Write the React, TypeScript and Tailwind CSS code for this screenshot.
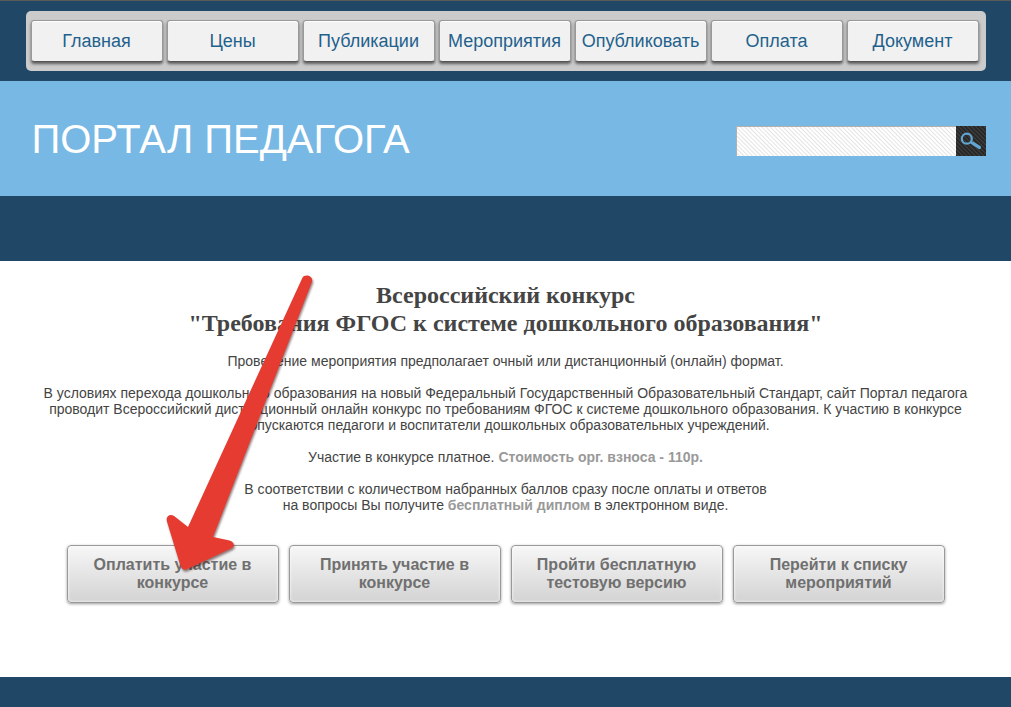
import React from "react";

const navItems = ["Главная", "Цены", "Публикации", "Мероприятия", "Опубликовать", "Оплата", "Документ"];

const actions: [string, string][] = [
  ["Оплатить участие в", "конкурсе"],
  ["Принять участие в", "конкурсе"],
  ["Пройти бесплатную", "тестовую версию"],
  ["Перейти к списку", "мероприятий"],
];

function TopNav() {
  return (
    <div className="border-t border-[#5b5a57] py-[10px]">
      <nav className="mx-auto flex max-w-[960px] gap-1 rounded-[5px] bg-[#cbcbcb] py-[9px] pr-[7px] pl-[5px]">
        {navItems.map((label) => (
          <a
            key={label}
            href="#"
            className="flex h-[42px] min-w-0 flex-1 items-center justify-center rounded-[3px] border border-[#999] border-b-[#555] bg-[#f1f1f1] text-[18px] text-[#1f618d] shadow-[0_2px_3px_rgba(0,0,0,0.55),inset_0_1px_1px_#fff]"
          >
            {label}
          </a>
        ))}
      </nav>
    </div>
  );
}

function SearchForm() {
  return (
    <form className="flex h-[30px] w-[250px]" onSubmit={(e) => e.preventDefault()}>
      <input
        type="text"
        aria-label="Поиск"
        className="min-w-0 flex-1 border-t border-l border-[#b5b0ae] bg-white bg-[repeating-linear-gradient(45deg,#fff_0px,#fff_1px,#e4e4e4_2px,#fff_3px)] px-2 text-sm text-[#444] outline-none"
      />
      <button
        type="submit"
        aria-label="Найти"
        className="flex w-[30px] items-center justify-center bg-[#2e2e2e] bg-[repeating-linear-gradient(45deg,#222_0px,#2e2e2e_1px,#404040_2px,#222_3px)]"
      >
        <svg width="30" height="30" viewBox="0 0 30 30" fill="none" stroke="#62a5d3">
          <circle cx="10.8" cy="12.7" r="5" strokeWidth="2.2" />
          <path d="M14.6 16l1.8 1.2" strokeWidth="2.4" />
          <path d="M17 17.4l6.400 4" strokeWidth="3.4" strokeLinecap="round" />
        </svg>
      </button>
    </form>
  );
}

function Arrow() {
  return (
    <svg
      aria-hidden="true"
      className="pointer-events-none absolute top-[10px] left-[134px]"
      width="160"
      height="304"
      viewBox="160 271 160 304"
    >
      <path
        className="drop-shadow-[1px_2px_1px_rgba(60,20,20,0.55)]"
        fill="#e63b31"
        d="M302.3 278C304.5 273.500 313.500 275.500 312 281.500L213 537L228.500 540.300C234.500 541.500 235.500 546.500 231 548.500L188.500 568.500C185 570.800 181.800 569.500 180.500 566L167 521.500C165.200 516.500 170 513.500 174 516L188 527Z"
      />
    </svg>
  );
}

export default function App() {
  return (
    <div className="min-h-screen bg-[#204765] font-['Liberation_Sans',Arial,sans-serif] text-[#444]">
      <TopNav />
      <header className="bg-[#77b8e5]">
        <div className="mx-auto flex h-[115px] max-w-[960px] items-center justify-between pl-[6px]">
          <h1 className="text-[40px] leading-[48px] text-white">ПОРТАЛ ПЕДАГОГА</h1>
          <div className="pt-1">
            <SearchForm />
          </div>
        </div>
      </header>
      <main className="mt-[65px] bg-white">
        <div className="relative mx-auto max-w-[960px] pt-5 pb-[74px] text-center text-[14px] leading-4">
          <h2 className="mb-4 font-['Liberation_Serif',serif] text-[24px] leading-7 font-bold">
            Всероссийский конкурс
            <br />
            "Требования ФГОС к системе дошкольного образования"
          </h2>
          <div className="flex flex-col gap-4 px-4">
            <p>Проведение мероприятия предполагает очный или дистанционный (онлайн) формат.</p>
            <p>
              В условиях перехода дошкольного образования на новый Федеральный Государственный Образовательный
              Стандарт, сайт Портал педагога проводит Всероссийский дистанционный онлайн конкурс по требованиям ФГОС
              к системе дошкольного образования. К участию в конкурсе допускаются педагоги и воспитатели дошкольных
              образовательных учреждений.
            </p>
            <p>
              Участие в конкурсе платное. <b className="text-[#999]">Стоимость орг. взноса - 110р.</b>
            </p>
            <p>
              В соответствии с количеством набранных баллов сразу после оплаты и ответов
              <br />
              на вопросы Вы получите <b className="text-[#999]">бесплатный диплом</b> в электронном виде.
            </p>
          </div>
          <div className="mt-8 grid grid-cols-4 gap-[10px] px-[41px]">
            {actions.map(([first, second]) => (
              <button
                key={first + second}
                type="button"
                className="h-[58px] rounded-[4px] border border-[#999] bg-linear-to-b from-[#f7f7f7] to-[#d3d3d3] text-[16px] leading-[18px] font-bold text-[#707070] shadow-[0_1px_3px_rgba(0,0,0,0.4),inset_0_0_3px_#fff]"
              >
                {first}
                <br />
                {second}
              </button>
            ))}
          </div>
          <Arrow />
        </div>
      </main>
    </div>
  );
}
